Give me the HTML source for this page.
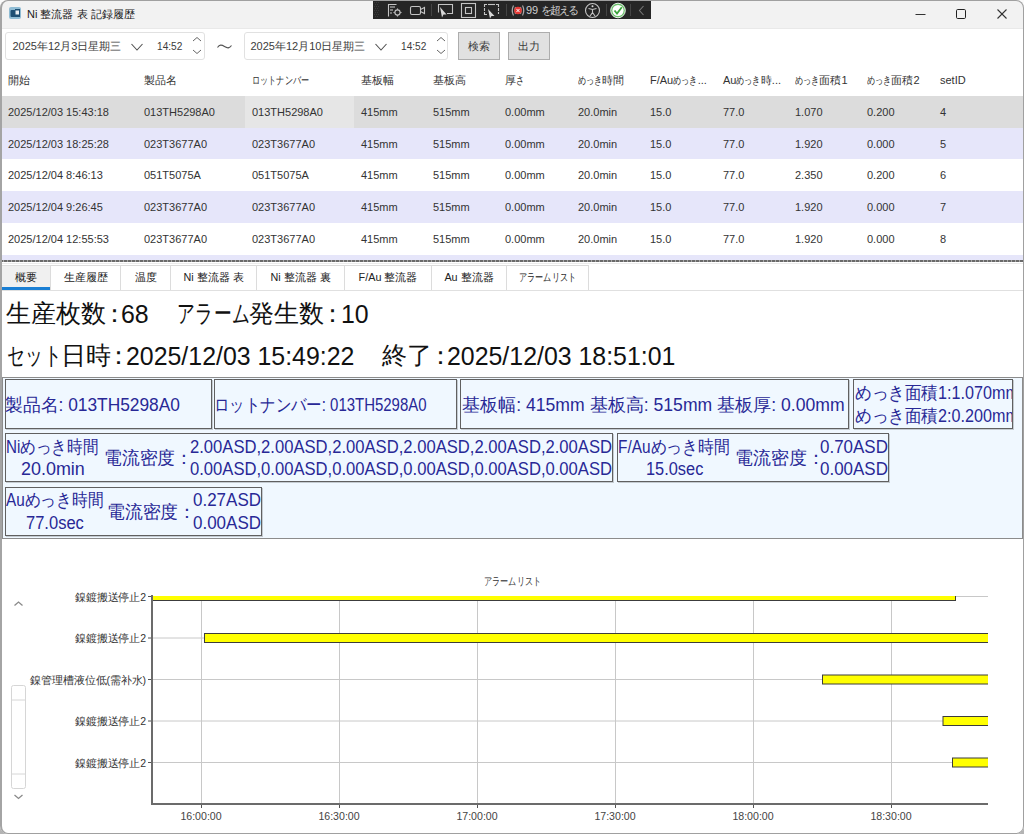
<!DOCTYPE html>
<html><head><meta charset="utf-8">
<style>
*{box-sizing:border-box;margin:0;padding:0}
html,body{width:1024px;height:834px;overflow:hidden;background:linear-gradient(#fafafa 0 50%,#b4b4b4 50% 100%)}
body{font-family:"Liberation Sans",sans-serif;color:#000;position:relative}
.a{position:absolute;white-space:nowrap}
#win{position:absolute;left:0;top:0;width:1024px;height:834px;overflow:hidden;background:#fff;border-radius:8px}
#frame{position:absolute;left:0;top:0;width:1024px;height:834px;border:1px solid #a0a0a0;border-left:2px solid #a4a4a4;border-radius:8px;pointer-events:none}
#title{position:absolute;left:0;top:0;width:1024px;height:29px;background:#f2f2f2;border-bottom:1px solid #e9e9e9}
.picker{position:absolute;top:32px;height:28px;border:1px solid #e1e1e1;border-radius:3px;background:#fff}
.ptxt{position:absolute;top:6px;font-size:11px;line-height:14px;color:#3c3c3c}
.btn{position:absolute;top:32px;height:28px;width:42px;background:#e1e1e1;border:1px solid #adadad;font-size:11px;text-align:center;line-height:26px;color:#3a3a3a}
.hdr{position:absolute;top:70px;height:20px;font-size:11px;color:#333;line-height:20px;white-space:nowrap}
.row{position:absolute;left:0;width:1024px;height:32px}
.c{position:absolute;top:0;height:32px;line-height:32px;font-size:11px;color:#333;white-space:nowrap}
.tab{position:absolute;top:265px;height:25px;border:1px solid #dcdcdc;border-bottom:none;background:#fff;font-size:10.8px;line-height:22px;text-align:center;color:#222}
.tab.sel{background:#f0f0f0;border-color:#e0e0e0}
.big{position:absolute;left:8px;font-size:25px;line-height:30px;color:#111;white-space:nowrap}
.s{position:absolute;top:0}
.kn{transform:scaleX(0.71);transform-origin:0 0}
.dg{font-size:24.9px;top:1px}
.bx{position:absolute;border:1px solid #606060;box-shadow:1px 1px 0 rgba(0,0,0,0.18)}
.pt{position:absolute;white-space:nowrap;font-size:17.5px;line-height:17.5px;color:#282896;transform-origin:0 0}
.yl{position:absolute;right:878px;font-size:10.5px;letter-spacing:-0.1px;line-height:14px;color:#333;white-space:nowrap}
.xl{position:absolute;top:809px;width:60px;text-align:center;font-size:10.6px;line-height:14px;color:#444}
.k{display:inline-block;transform:scaleX(0.74);transform-origin:0 0;white-space:nowrap;vertical-align:top}
</style></head><body>
<div id="win">
 <div id="title">
  <svg class="a" style="left:9px;top:7px" width="13" height="13" viewBox="0 0 13 13"><rect x="0" y="0" width="12" height="12" rx="2" fill="#8fbcd4"/><rect x="1.5" y="3" width="5" height="7" rx="1" fill="#1d4f73"/><rect x="6" y="2" width="5" height="8" fill="#1d4f73"/><rect x="6.5" y="3.5" width="3.5" height="4" fill="#e8eef2"/></svg>
  <div class="a" style="left:27px;top:7px;font-size:11px;line-height:14px;color:#1a1a1a">Ni 整流器 表 記録履歴</div>
 </div>
 <!-- pickers -->
 <div class="picker" style="left:5px;width:200px">
  <div class="ptxt" style="left:6.5px">2025年12月3日星期三</div>
  <div class="ptxt" style="left:151px;transform:scaleX(0.92);transform-origin:0 0">14:52</div>
 </div>
 <svg class="a" style="left:216px;top:42px" width="17" height="9" viewBox="0 0 17 9"><path d="M1.5 5.5 C3.5 2.5 5.5 2.5 8.5 4.5 C11.5 6.5 13.5 6.5 15.5 3.5" fill="none" stroke="#555" stroke-width="1.1"/></svg>
 <div class="picker" style="left:244px;width:204px">
  <div class="ptxt" style="left:5.5px">2025年12月10日星期三</div>
  <div class="ptxt" style="left:155.5px;transform:scaleX(0.92);transform-origin:0 0">14:52</div>
 </div>
 <div class="btn" style="left:458px">検索</div>
 <div class="btn" style="left:508px">出力</div>
 <!-- header -->
 <div class="hdr" style="left:8px">開始</div>
 <div class="hdr" style="left:144px">製品名</div>
 <div class="hdr" style="left:252px"><span class="k" style="width:57.0px">ロットナンバー</span></div>
 <div class="hdr" style="left:361px">基板幅</div>
 <div class="hdr" style="left:433px">基板高</div>
 <div class="hdr" style="left:505px">厚<span class="k" style="width:8.1px">さ</span></div>
 <div class="hdr" style="left:578px"><span class="k" style="width:24.4px">めっき</span>時間</div>
 <div class="hdr" style="left:650px">F/Au<span class="k" style="width:24.4px">めっき</span>...</div>
 <div class="hdr" style="left:723px">Au<span class="k" style="width:24.4px">めっき</span>時...</div>
 <div class="hdr" style="left:795px"><span class="k" style="width:24.4px">めっき</span>面積1</div>
 <div class="hdr" style="left:867px"><span class="k" style="width:24.4px">めっき</span>面積2</div>
 <div class="hdr" style="left:940px">setID</div>
 <!-- rows -->
 <div class="row" style="top:96px;background:#dcdcdc"><div class="a" style="left:245px;top:0;width:109px;height:32px;background:#e6e6e6"></div>
  <div class="c" style="left:8px">2025/12/03 15:43:18</div><div class="c" style="left:144px">013TH5298A0</div><div class="c" style="left:252px">013TH5298A0</div><div class="c" style="left:361px">415mm</div><div class="c" style="left:433px">515mm</div><div class="c" style="left:505px">0.00mm</div><div class="c" style="left:578px">20.0min</div><div class="c" style="left:650px">15.0</div><div class="c" style="left:723px">77.0</div><div class="c" style="left:795px">1.070</div><div class="c" style="left:867px">0.200</div><div class="c" style="left:940px">4</div></div>
 <div class="row" style="top:128px;background:#e6e6fa">
  <div class="c" style="left:8px">2025/12/03 18:25:28</div><div class="c" style="left:144px">023T3677A0</div><div class="c" style="left:252px">023T3677A0</div><div class="c" style="left:361px">415mm</div><div class="c" style="left:433px">515mm</div><div class="c" style="left:505px">0.00mm</div><div class="c" style="left:578px">20.0min</div><div class="c" style="left:650px">15.0</div><div class="c" style="left:723px">77.0</div><div class="c" style="left:795px">1.920</div><div class="c" style="left:867px">0.000</div><div class="c" style="left:940px">5</div></div>
 <div class="row" style="top:159px;background:#fff">
  <div class="c" style="left:8px">2025/12/04 8:46:13</div><div class="c" style="left:144px">051T5075A</div><div class="c" style="left:252px">051T5075A</div><div class="c" style="left:361px">415mm</div><div class="c" style="left:433px">515mm</div><div class="c" style="left:505px">0.00mm</div><div class="c" style="left:578px">20.0min</div><div class="c" style="left:650px">15.0</div><div class="c" style="left:723px">77.0</div><div class="c" style="left:795px">2.350</div><div class="c" style="left:867px">0.200</div><div class="c" style="left:940px">6</div></div>
 <div class="row" style="top:191px;background:#e6e6fa">
  <div class="c" style="left:8px">2025/12/04 9:26:45</div><div class="c" style="left:144px">023T3677A0</div><div class="c" style="left:252px">023T3677A0</div><div class="c" style="left:361px">415mm</div><div class="c" style="left:433px">515mm</div><div class="c" style="left:505px">0.00mm</div><div class="c" style="left:578px">20.0min</div><div class="c" style="left:650px">15.0</div><div class="c" style="left:723px">77.0</div><div class="c" style="left:795px">1.920</div><div class="c" style="left:867px">0.000</div><div class="c" style="left:940px">7</div></div>
 <div class="row" style="top:223px;background:#fff">
  <div class="c" style="left:8px">2025/12/04 12:55:53</div><div class="c" style="left:144px">023T3677A0</div><div class="c" style="left:252px">023T3677A0</div><div class="c" style="left:361px">415mm</div><div class="c" style="left:433px">515mm</div><div class="c" style="left:505px">0.00mm</div><div class="c" style="left:578px">20.0min</div><div class="c" style="left:650px">15.0</div><div class="c" style="left:723px">77.0</div><div class="c" style="left:795px">1.920</div><div class="c" style="left:867px">0.000</div><div class="c" style="left:940px">8</div></div>
 <div class="row" style="top:255px;height:5px;background:#e6e6fa"></div>
 <div class="a" style="left:0;top:260px;width:1024px;height:2px;background:repeating-linear-gradient(90deg,#6a6a6a 0 3px,#a8a8a8 3px 4px)"></div><div class="a" style="left:0;top:263px;width:1024px;height:1px;background:#ececec"></div>
 <!-- tabs -->
 <div class="a" style="left:0;top:290px;width:1024px;height:1px;background:#e0e0e0"></div>
 <div class="tab sel" style="left:1px;width:50px">概要</div>
 <div class="tab" style="left:50px;width:71px">生産履歴</div>
 <div class="tab" style="left:120px;width:51px">温度</div>
 <div class="tab" style="left:170px;width:87px">Ni 整流器 表</div>
 <div class="tab" style="left:256px;width:89px">Ni 整流器 裏</div>
 <div class="tab" style="left:344px;width:88px">F/Au 整流器</div>
 <div class="tab" style="left:431px;width:76px">Au 整流器</div>
 <div class="tab" style="left:506px;width:83px"><span class="k" style="width:57.0px">アラームリスト</span></div>
 <div class="a" style="left:1px;top:287px;width:49px;height:3px;background:#1a7fd4"></div>
 <!-- big text -->
 <div class="big" style="top:298px"><span class="s" style="left:-2px">生産枚数</span><span class="s" style="left:94px">：</span><span class="s dg" style="left:113px">68</span><span class="s kn" style="left:169px">アラーム</span><span class="s" style="left:241px">発生数</span><span class="s" style="left:312px">：</span><span class="s dg" style="left:333px">10</span></div>
 <div class="big" style="top:340px"><span class="s kn" style="left:-1px">セット</span><span class="s" style="left:53px">日時</span><span class="s" style="left:98px">：</span><span class="s dg" style="left:118px">2025/12/03 15:49:22</span><span class="s" style="left:374px">終了</span><span class="s" style="left:420px">：</span><span class="s dg" style="left:439px">2025/12/03 18:51:01</span></div>
 <!--PANEL-->
 <div class="a" style="left:2px;top:377px;width:1021px;height:162px;background:#f0f8ff;border:1px solid #8c8c8c"></div>
 <div class="bx" style="left:5px;top:379px;width:207px;height:50px"></div>
 <div class="bx" style="left:214px;top:379px;width:243px;height:50px"></div>
 <div class="bx" style="left:460px;top:379px;width:389px;height:50px"></div>
 <div class="bx" style="left:853px;top:379px;width:160px;height:50px;overflow:hidden"></div>
 <div class="bx" style="left:5px;top:433px;width:608px;height:49px"></div>
 <div class="bx" style="left:617px;top:433px;width:272px;height:49px"></div>
 <div class="bx" style="left:5px;top:487px;width:257px;height:49px"></div>

 <div class="pt" style="left:5.3px;top:397.2px;transform:scaleX(0.9909)">製品名: 013TH5298A0</div>
 <div class="pt" style="left:213.9px;top:397.2px;transform:scaleX(0.8551)">ロットナンバー: 013TH5298A0</div>
 <div class="pt" style="left:461.6px;top:397.2px;transform:scaleX(1.0047)">基板幅: 415mm 基板高: 515mm 基板厚: 0.00mm</div>
 <div class="a" style="left:854px;top:380px;width:158px;height:48px;overflow:hidden"><div class="pt" style="left:0.6px;top:5.2px;transform:scaleX(0.9233)">めっき面積1:1.070mm</div></div>
 <div class="a" style="left:854px;top:380px;width:158px;height:48px;overflow:hidden"><div class="pt" style="left:0.6px;top:28.2px;transform:scaleX(0.9233)">めっき面積2:0.200mm</div></div>
 <div class="pt" style="left:5.9px;top:438.6px;transform:scaleX(0.8657)">Niめっき時間</div>
 <div class="pt" style="left:20.5px;top:461.4px;transform:scaleX(1.0250)">20.0min</div>
 <div class="pt" style="left:103.5px;top:450.2px;transform:scaleX(0.9887)">電流密度：</div>
 <div class="pt" style="left:189.6px;top:438.6px;transform:scaleX(0.9492)">2.00ASD,2.00ASD,2.00ASD,2.00ASD,2.00ASD,2.00ASD</div>
 <div class="pt" style="left:189.6px;top:461.4px;transform:scaleX(0.9492)">0.00ASD,0.00ASD,0.00ASD,0.00ASD,0.00ASD,0.00ASD</div>
 <div class="pt" style="left:618.1px;top:438.6px;transform:scaleX(0.8800)">F/Auめっき時間</div>
 <div class="pt" style="left:646.0px;top:461.4px;transform:scaleX(0.9350)">15.0sec</div>
 <div class="pt" style="left:735.0px;top:450.2px;transform:scaleX(0.9975)">電流密度：</div>
 <div class="pt" style="left:820.2px;top:438.6px;transform:scaleX(0.9691)">0.70ASD</div>
 <div class="pt" style="left:820.2px;top:461.4px;transform:scaleX(0.9691)">0.00ASD</div>
 <div class="pt" style="left:5.9px;top:492.4px;transform:scaleX(0.8736)">Auめっき時間</div>
 <div class="pt" style="left:25.5px;top:515.4px;transform:scaleX(0.9433)">77.0sec</div>
 <div class="pt" style="left:106.5px;top:504.2px;transform:scaleX(0.9900)">電流密度：</div>
 <div class="pt" style="left:192.5px;top:492.4px;transform:scaleX(0.9706)">0.27ASD</div>
 <div class="pt" style="left:192.5px;top:515.4px;transform:scaleX(0.9706)">0.00ASD</div>
 <!--/PANEL-->
 <!--CHART-->
 <svg class="a" style="left:0;top:0" width="1024" height="834" viewBox="0 0 1024 834">
 <line x1="152" y1="596.5" x2="988" y2="596.5" stroke="#c8c8c8" stroke-width="1"/>
 <line x1="148" y1="596.5" x2="152" y2="596.5" stroke="#555" stroke-width="1"/>
 <line x1="152" y1="638" x2="988" y2="638" stroke="#c8c8c8" stroke-width="1"/>
 <line x1="148" y1="638" x2="152" y2="638" stroke="#555" stroke-width="1"/>
 <line x1="152" y1="679.5" x2="988" y2="679.5" stroke="#c8c8c8" stroke-width="1"/>
 <line x1="148" y1="679.5" x2="152" y2="679.5" stroke="#555" stroke-width="1"/>
 <line x1="152" y1="721" x2="988" y2="721" stroke="#c8c8c8" stroke-width="1"/>
 <line x1="148" y1="721" x2="152" y2="721" stroke="#555" stroke-width="1"/>
 <line x1="152" y1="762.5" x2="988" y2="762.5" stroke="#c8c8c8" stroke-width="1"/>
 <line x1="148" y1="762.5" x2="152" y2="762.5" stroke="#555" stroke-width="1"/>
 <line x1="201.5" y1="596" x2="201.5" y2="803" stroke="#c8c8c8" stroke-width="1"/>
 <line x1="201.5" y1="803" x2="201.5" y2="808" stroke="#555" stroke-width="1"/>
 <line x1="339.5" y1="596" x2="339.5" y2="803" stroke="#c8c8c8" stroke-width="1"/>
 <line x1="339.5" y1="803" x2="339.5" y2="808" stroke="#555" stroke-width="1"/>
 <line x1="477.5" y1="596" x2="477.5" y2="803" stroke="#c8c8c8" stroke-width="1"/>
 <line x1="477.5" y1="803" x2="477.5" y2="808" stroke="#555" stroke-width="1"/>
 <line x1="615.5" y1="596" x2="615.5" y2="803" stroke="#c8c8c8" stroke-width="1"/>
 <line x1="615.5" y1="803" x2="615.5" y2="808" stroke="#555" stroke-width="1"/>
 <line x1="753.5" y1="596" x2="753.5" y2="803" stroke="#c8c8c8" stroke-width="1"/>
 <line x1="753.5" y1="803" x2="753.5" y2="808" stroke="#555" stroke-width="1"/>
 <line x1="891.5" y1="596" x2="891.5" y2="803" stroke="#c8c8c8" stroke-width="1"/>
 <line x1="891.5" y1="803" x2="891.5" y2="808" stroke="#555" stroke-width="1"/>
 <defs><clipPath id="pc"><rect x="152" y="596" width="836" height="208"/></clipPath></defs>
 <g clip-path="url(#pc)" fill="#ffff00" stroke="#3c3c3c" stroke-width="1">
 <rect x="152.5" y="592" width="803.0" height="8.5"/>
 <rect x="204.5" y="633.5" width="795.5" height="9.0"/>
 <rect x="822.5" y="675" width="177.5" height="9"/>
 <rect x="943" y="716.5" width="57" height="9.0"/>
 <rect x="952.5" y="758" width="47.5" height="9"/>
 </g>
 <line x1="152" y1="595" x2="152" y2="805" stroke="#6b6b6b" stroke-width="2"/>
 <line x1="151" y1="804" x2="988" y2="804" stroke="#6b6b6b" stroke-width="2"/>
 </svg>
 <div class="yl" style="top:589.5px">鎳鍍搬送停止2</div><div class="yl" style="top:631.0px">鎳鍍搬送停止2</div><div class="yl" style="top:672.5px">鎳管理槽液位低(需补水)</div><div class="yl" style="top:714.0px">鎳鍍搬送停止2</div><div class="yl" style="top:755.5px">鎳鍍搬送停止2</div><div class="xl" style="left:171px">16:00:00</div><div class="xl" style="left:309px">16:30:00</div><div class="xl" style="left:447px">17:00:00</div><div class="xl" style="left:585px">17:30:00</div><div class="xl" style="left:723px">18:00:00</div><div class="xl" style="left:861px">18:30:00</div>
 <div class="a" style="left:484px;top:574px;font-size:11px;line-height:14px;color:#333"><span class="k" style="width:57.0px">アラームリスト</span></div>
 <!--/CHART-->
</div>
<!--EXTRAS-->
 <svg class="a" style="left:0;top:0" width="1024" height="834" viewBox="0 0 1024 834">
  <!-- picker chevrons -->
  <polyline points="131.5,44 137,50 142.5,44" fill="none" stroke="#505050" stroke-width="1.1"/>
  <polyline points="193,41 197,37.5 201,41" fill="none" stroke="#666" stroke-width="1"/>
  <polyline points="193,50 197,53.5 201,50" fill="none" stroke="#666" stroke-width="1"/>
  <polyline points="375.5,44 381,50 386.5,44" fill="none" stroke="#505050" stroke-width="1.1"/>
  <polyline points="437,41 441,37.5 445,41" fill="none" stroke="#666" stroke-width="1"/>
  <polyline points="437,50 441,53.5 445,50" fill="none" stroke="#666" stroke-width="1"/>
  <!-- window controls -->
  <line x1="915.5" y1="14.5" x2="925.5" y2="14.5" stroke="#333" stroke-width="1"/>
  <rect x="956.5" y="9.5" width="9" height="9" rx="1.2" fill="none" stroke="#222" stroke-width="1"/>
  <line x1="997.5" y1="9.5" x2="1006.5" y2="18.5" stroke="#333" stroke-width="1.1"/>
  <line x1="1006.5" y1="9.5" x2="997.5" y2="18.5" stroke="#333" stroke-width="1.1"/>
  <!-- scroll widget -->
  <polyline points="14.5,605.5 18.5,602 22.5,605.5" fill="none" stroke="#8a8a8a" stroke-width="1.3"/>
  <polyline points="14.5,795 18.5,798.5 22.5,795" fill="none" stroke="#8a8a8a" stroke-width="1.3"/>
  <rect x="11.5" y="685.5" width="14" height="103" rx="2" fill="none" stroke="#d6d6d6" stroke-width="1"/>
  <line x1="12" y1="700" x2="25" y2="700" stroke="#d6d6d6"/>
  <line x1="12" y1="774" x2="25" y2="774" stroke="#d6d6d6"/>
 </svg>
 <!--/EXTRAS-->
 <!--TOOLBAR-->
 <div class="a" style="left:373px;top:0;width:278px;height:19px;background:#262626;border-top:1px solid #4a4a4a"></div>
 <svg class="a" style="left:0;top:0" width="660" height="20" viewBox="0 0 660 20">
  <g fill="#3a3a3a"><rect x="374" y="2" width="1" height="1"/><rect x="376" y="2" width="1" height="1"/><rect x="378" y="2" width="1" height="1"/><rect x="375" y="4" width="1" height="1"/><rect x="377" y="4" width="1" height="1"/><rect x="374" y="6" width="1" height="1"/><rect x="376" y="6" width="1" height="1"/><rect x="378" y="6" width="1" height="1"/><rect x="375" y="8" width="1" height="1"/><rect x="377" y="8" width="1" height="1"/><rect x="374" y="10" width="1" height="1"/><rect x="376" y="10" width="1" height="1"/><rect x="378" y="10" width="1" height="1"/><rect x="375" y="12" width="1" height="1"/><rect x="377" y="12" width="1" height="1"/><rect x="374" y="14" width="1" height="1"/><rect x="376" y="14" width="1" height="1"/><rect x="378" y="14" width="1" height="1"/><rect x="375" y="16" width="1" height="1"/><rect x="377" y="16" width="1" height="1"/></g>
  <g fill="none" stroke="#c4c4c4" stroke-width="1.1">
   <!-- doc + gear -->
   <path d="M388.5 16.5 V4.5 H396.5"/>
   <line x1="390" y1="7" x2="395" y2="7"/><line x1="390" y1="10" x2="393" y2="10"/><line x1="390" y1="13" x2="392" y2="13"/>
   <circle cx="397.5" cy="12.5" r="2.6"/>
   <path d="M397.5 8.5v1.2M397.5 15.3v1.2M393.5 12.5h1.2M400.3 12.5h1.2"/>
   <!-- camera -->
   <rect x="410.5" y="6.5" width="10" height="8" rx="1.5"/>
   <path d="M420.5 9.5 L424.5 7.5 V13.5 L420.5 11.5"/>
   <!-- screen cursor -->
   <path d="M438.5 12.5 V4.5 H452.5 V13.5 H447"/>
   <!-- square in square -->
   <rect x="461.5" y="3.5" width="14" height="14"/>
   <rect x="465.5" y="7.5" width="6" height="6"/>
   <!-- region -->
   <path d="M484.5 7V4.5H487M496 4.5h2.5V7M484.5 12v2.5H487M498.5 12v2"/>
   <line x1="488" y1="4.5" x2="495" y2="4.5"/><line x1="484.5" y1="8" x2="484.5" y2="11"/><line x1="498.5" y1="8" x2="498.5" y2="11"/>
   <!-- accessibility -->
   <circle cx="592.5" cy="10.5" r="7"/>
   <path d="M588.5 8.5 L592.5 9.5 L596.5 8.5 M592.5 9.5 V12.5 L590 16 M592.5 12.5 L595 16"/>
   <!-- chevron -->
   <polyline points="643.5,6 639.5,10.5 643.5,15" stroke="#777"/>
  </g>
  <g fill="#d8d8d8"><circle cx="592.5" cy="6.3" r="1"/>
   <path d="M440 7 L446.5 14.5 L443.5 14.5 L442 17.5 Z"/>
   <path d="M488 9 L494.5 16 L491.5 16 L490 18.5 Z"/>
  </g>
  <g stroke="#444" stroke-width="1"><line x1="431.5" y1="4" x2="431.5" y2="16"/><line x1="506.5" y1="4" x2="506.5" y2="16"/><line x1="606.5" y1="4" x2="606.5" y2="16"/><line x1="630.5" y1="4" x2="630.5" y2="16"/></g>
  <!-- record icon -->
  <path d="M513.5 5.5 Q511 10.5 513.5 15.5 M515.5 7 Q514 10.5 515.5 14 M522.5 5.5 Q525 10.5 522.5 15.5 M520.5 7 Q522 10.5 520.5 14" fill="none" stroke="#a8a8a8" stroke-width="1.2"/>
  <circle cx="518" cy="10.5" r="3.8" fill="#e53935"/>
  <path d="M516.4 8.9l3.2 3.2M519.6 8.9l-3.2 3.2" stroke="#fff" stroke-width="1"/>
  <!-- green check -->
  <circle cx="618" cy="10.5" r="7.3" fill="#6cc06c" stroke="#e8f5e8" stroke-width="1"/>
  <circle cx="618" cy="10.5" r="5.6" fill="#fff"/>
  <path d="M614.5 10.5 L617 13.5 L621.8 7.3" fill="none" stroke="#3aa53a" stroke-width="1.8"/>
 </svg>
 <div class="a" style="left:526px;top:3px;font-size:11px;line-height:14px;color:#cfcfcf">99 <span style="letter-spacing:-2px">を超える</span></div>
 <!--/TOOLBAR-->
<div id="frame"></div>
</body></html>
